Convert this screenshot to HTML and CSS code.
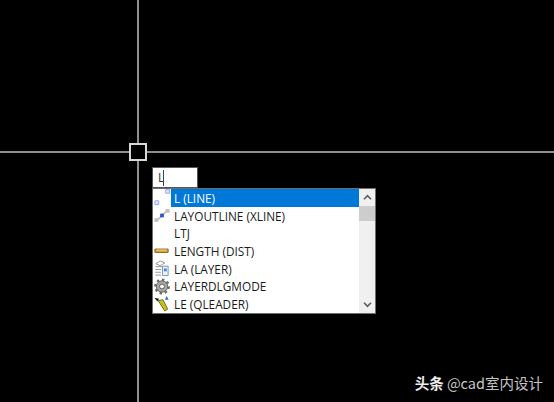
FILE: index.html
```html
<!DOCTYPE html>
<html>
<head>
<title>LINE</title>
<link rel="stylesheet" href="styles.css">
</head>
<body>
<div class="canvas">
  <div class="cross-v"></div>
  <div class="cross-h"></div>
  <div class="pickbox"></div>

  <div class="cmd-input"><span class="typed">L</span><span class="caret"></span></div>

  <div class="suggest">
    <ul class="items">
      <li class="item">
        <svg class="ico" viewBox="0 0 18 18"><path d="M13 0.5h4v4h-4zM1.5 12.5h4v4h-4z" fill="#dfe6fb" stroke="#8fa4ee"/></svg>
        <span class="label on">L (LINE)</span>
      </li>
      <li class="item">
        <svg class="ico" viewBox="0 0 18 18"><path d="M4 14L14 4" stroke="#b5b5b5" stroke-width="1.5"/><path d="M1 12h4v4H1zM13 2h4v4h-4z" fill="#c0c0c0"/><path d="M7 7h4v4H7z" fill="#2f55c8"/></svg>
        <span class="label">LAYOUTLINE (XLINE)</span>
      </li>
      <li class="item">
        <span class="ico"></span>
        <span class="label">LTJ</span>
      </li>
      <li class="item">
        <svg class="ico" viewBox="0 0 18 18"><path d="M1.5 7.5h14v3.5h-14z" fill="#e3aa3c" stroke="#7a5a18"/><path d="M3 8.5h11" stroke="#f3d48a"/></svg>
        <span class="label">LENGTH (DIST)</span>
      </li>
      <li class="item">
        <svg class="ico" viewBox="0 0 18 18"><path d="M7 1L2.5 4 7 6l5-3zM2 7h7M2 10h6M2 13h6M2 16h6" fill="none" stroke="#909090"/><path d="M9.5 6.5h6v10h-6z" fill="#eef2f8" stroke="#7391b5"/><path d="M11 9h3v3h-3z" fill="#4a86cf"/></svg>
        <span class="label">LA (LAYER)</span>
      </li>
      <li class="item">
        <svg class="ico" viewBox="0 0 18 18"><circle cx="9" cy="9" r="6" fill="#a8a8a8" stroke="#5a5a5a"/><circle cx="9" cy="9" r="7.2" fill="none" stroke="#6a6a6a" stroke-width="2.4" stroke-dasharray="2.6 3"/><circle cx="9" cy="9" r="2.6" fill="#f6f6f6" stroke="#5a5a5a"/></svg>
        <span class="label">LAYERDLGMODE</span>
      </li>
      <li class="item">
        <svg class="ico" viewBox="0 0 18 18"><path d="M5 6l7 11 3-2-5-10z" fill="#c3cc24" stroke="#59661a"/><path d="M1 3l5 1-2 3z" fill="#1d1d1d"/><path d="M8 8l5 8" stroke="#e2a91a" stroke-width="1.5"/><path d="M14 1l-2 4h4z" fill="#2f6fc4"/></svg>
        <span class="label">LE (QLEADER)</span>
      </li>
    </ul>
    <div class="scroll">
      <svg class="arrow" viewBox="0 0 10 8"><path d="M1 6l4-4 4 4" fill="none" stroke="#606060" stroke-width="2"/></svg>
      <div class="thumb"></div>
      <svg class="arrow arrow-down" viewBox="0 0 10 8"><path d="M1 2l4 4 4-4" fill="none" stroke="#606060" stroke-width="2"/></svg>
    </div>
  </div>

  <div class="mark"><b class="brand">头条</b> @cad室内设计</div>
</div>
</body>
</html>
```

FILE: styles.css
```css
html, body {
  margin: 0;
  background: #000;
}

.canvas {
  position: relative;
  width: 554px;
  height: 402px;
  overflow: hidden;
  background: #000;
  font-family: "Open Sans", "Liberation Sans", Arial, sans-serif;
}

/* crosshair */
.cross-v {
  position: absolute;
  left: 137px;
  top: 0;
  width: 2px;
  height: 402px;
  background: #8f8f8f;
}
.cross-h {
  position: absolute;
  left: 0;
  top: 151px;
  width: 554px;
  height: 2px;
  background: #8f8f8f;
}
.pickbox {
  position: absolute;
  left: 129px;
  top: 143px;
  width: 14px;
  height: 14px;
  border: 2px solid #d8d8d8;
  background: #000;
}

/* command input */
.cmd-input {
  position: absolute;
  left: 152px;
  top: 167px;
  width: 46px;
  height: 21px;
  box-sizing: border-box;
  border: 1px solid #555;
  background: #fff;
  display: flex;
  align-items: center;
  padding-left: 5px;
  font-size: 12px;
  color: #333;
}
.caret {
  width: 1px;
  height: 16px;
  background: #444;
  margin-left: -1px;
}

/* suggestion list */
.suggest {
  position: absolute;
  left: 152px;
  top: 188px;
  width: 224px;
  height: 126px;
  box-sizing: border-box;
  border: 1px solid #6e6e6e;
  background: #fff;
  display: flex;
}
.items {
  flex: 1;
  margin: 0;
  padding: 0;
  list-style: none;
}
.item {
  height: 17.7px;
  display: flex;
  align-items: center;
  font-size: 11.8px;
  color: #1a1a1a;
}
.ico {
  width: 18px;
  height: 17px;
  flex: none;
}
.label {
  flex: 1;
  height: 100%;
  display: flex;
  align-items: center;
  padding-left: 3px;
  white-space: nowrap;
}
.label.on {
  background: #0078d7;
  color: #fff;
}

.scroll {
  width: 16px;
  flex: none;
  background: #f0f0f0;
  display: flex;
  flex-direction: column;
  align-items: center;
}
.arrow {
  width: 9px;
  height: 7px;
  margin-top: 5px;
  flex: none;
}
.arrow-down {
  margin-top: auto;
  margin-bottom: 5px;
}
.thumb {
  width: 100%;
  height: 15px;
  margin-top: 5px;
  background: #cdcdcd;
}

/* watermark */
.mark {
  position: absolute;
  right: 11px;
  top: 375px;
  font-family: "Noto Sans CJK SC", "Liberation Sans", sans-serif;
  font-size: 14.5px;
  line-height: 16px;
  color: #c4c4c4;
  white-space: nowrap;
}
.brand {
  color: #ececec;
  font-weight: 700;
}
```
